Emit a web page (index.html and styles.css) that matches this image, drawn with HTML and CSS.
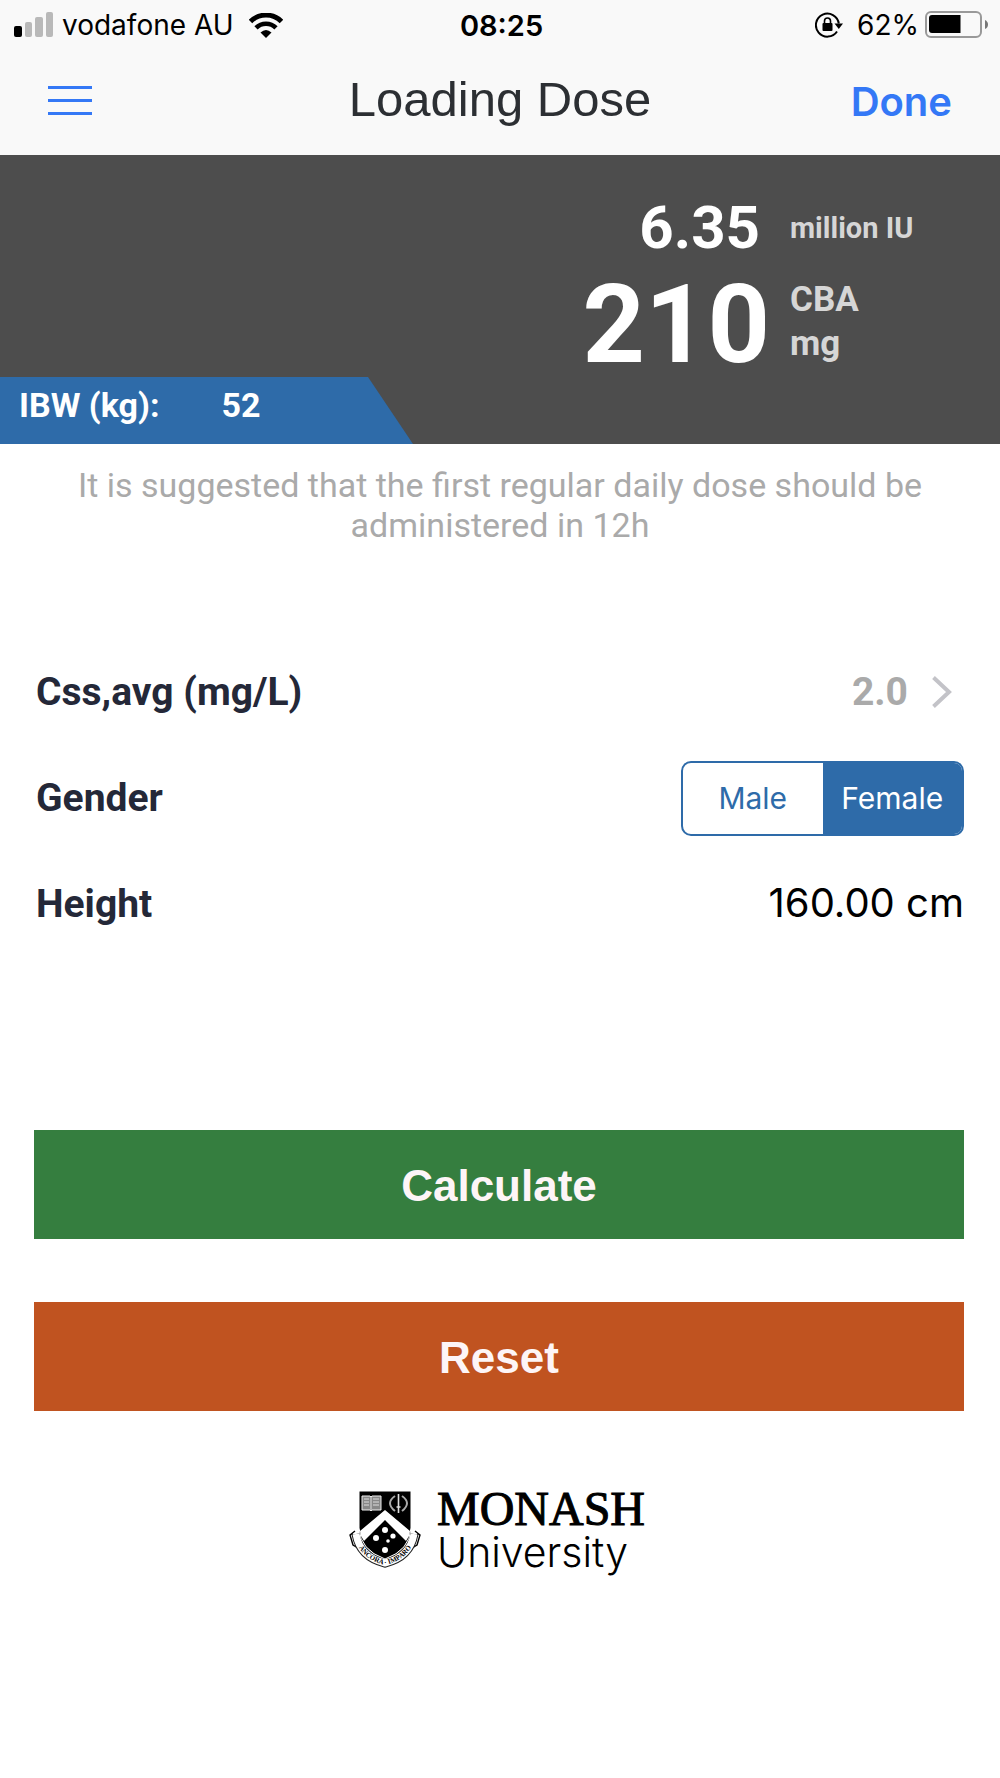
FILE: index.html
```html
<!DOCTYPE html>
<html lang="en">
<head>
    <meta charset="UTF-8">
    <meta name="viewport" content="width=device-width, initial-scale=1.0">
    <title>Loading Dose</title>
    <link rel="stylesheet" href="styles.css">
</head>
<body>

<header class="top">
    <div class="status-bar">
        <div class="status-left">
            <svg viewBox="0 0 40 26" width="40" height="26" aria-hidden="true">
                <rect x="0" y="14" width="8" height="11" rx="2" fill="#000"/>
                <rect x="11" y="10" width="7" height="15" rx="2" fill="#b9b9b9"/>
                <rect x="21" y="5" width="8" height="20" rx="2" fill="#b9b9b9"/>
                <rect x="32" y="0" width="7" height="25" rx="2" fill="#b9b9b9"/>
            </svg>
            <span class="carrier">vodafone AU</span>
            <svg viewBox="0 0 34 25" width="34" height="25" aria-hidden="true">
                <path d="M1.5 8.5A22 22 0 0 1 32.5 8.5" fill="none" stroke="#000" stroke-width="5"/>
                <path d="M7 14.8A14.2 14.2 0 0 1 27 14.8" fill="none" stroke="#000" stroke-width="4.6"/>
                <path d="M11.5 19.5Q17 14.5 22.5 19.5L17 25Z" fill="#000"/>
            </svg>
        </div>
        <span class="clock">08:25</span>
        <div class="status-right">
            <svg viewBox="0 0 28 26" width="28" height="26" aria-hidden="true">
                <path d="M22 19.5A11.5 11.5 0 1 1 23.8 11.5" fill="none" stroke="#000" stroke-width="2"/>
                <path d="M19.5 11.5H28L23.8 17Z" fill="#000"/>
                <rect x="7.5" y="11" width="10" height="8" rx="1" fill="#000"/>
                <path d="M9.5 11.5V9a3 3 0 0 1 6 0V11.5" fill="none" stroke="#000" stroke-width="1.6"/>
            </svg>
            <span class="percent">62%</span>
            <svg viewBox="0 0 64 28" width="64" height="28" aria-hidden="true">
                <rect x="1" y="1" width="55" height="25" rx="5" fill="none" stroke="#999" stroke-width="2"/>
                <path d="M7 4H35.5V22H7a3 3 0 0 1-3-3V7a3 3 0 0 1 3-3Z" fill="#000"/>
                <path d="M60 9q3 1.5 3 4.5t-3 4.5Z" fill="#777"/>
            </svg>
        </div>
    </div>
    <nav class="nav-bar">
        <button type="button" class="menu" aria-label="Menu">
            <span></span>
            <span></span>
            <span></span>
        </button>
        <h1>Loading Dose</h1>
        <button type="button" class="done">Done</button>
    </nav>
</header>

<section class="result">
    <div class="dose">
        <span class="dose-iu">6.35</span>
        <span class="unit-iu">million IU</span>
        <span class="dose-mg">210</span>
        <span class="unit-mg">CBA<br>mg</span>
    </div>
    <div class="ibw">
        <span>IBW (kg):</span>
        <span>52</span>
    </div>
</section>

<p class="note">It is suggested that the first regular daily dose should be administered in 12h</p>

<form class="dose-form">
    <div class="row">
        <label for="css">Css,avg (mg/L)</label>
        <button type="button" class="picker" id="css">
            2.0
            <svg viewBox="0 0 20 32" width="20" height="32" aria-hidden="true">
                <path d="M1.5 1.5L17 16L1.5 30.5" fill="none" stroke="#c3c3c8" stroke-width="4"/>
            </svg>
        </button>
    </div>
    <div class="row" role="radiogroup" aria-labelledby="gender">
        <span id="gender">Gender</span>
        <div class="segmented">
            <input type="radio" name="gender" id="male">
            <label for="male">Male</label>
            <input type="radio" name="gender" id="female" checked>
            <label for="female">Female</label>
        </div>
    </div>
    <div class="row">
        <label for="height">Height</label>
        <input type="text" class="height" id="height" value="160.00 cm">
    </div>

    <div class="actions">
        <button type="button" class="btn btn-calculate">Calculate</button>
        <button type="reset" class="btn btn-reset">Reset</button>
    </div>
</form>

<footer class="logo">
    <svg viewBox="0 0 72 80" width="72" height="80" role="img" aria-label="Crest">
        <!-- ribbon -->
        <path d="M6 41L1 45L4 55L9 58M66 41L71 45L68 55L63 58M3 44L8 54M69 44L64 54" fill="none" stroke="#000" stroke-width="1.4"/>
        <path d="M7 44Q11 67 36 73Q61 67 65 44" fill="none" stroke="#222" stroke-width="9"/>
        <path d="M7 44Q11 67 36 73Q61 67 65 44" fill="none" stroke="#fff" stroke-width="7"/>
        <path id="motto" d="M5 46Q11 69 36 75Q61 69 67 46" fill="none"/>
        <text class="motto"><textPath href="#motto" startOffset="50%" text-anchor="middle">ANCORA · IMPARO</textPath></text>
        <!-- shield -->
        <path d="M10 1H62V38Q61 60 36 69Q11 60 10 38Z" fill="#000" stroke="#fff" stroke-width="1"/>
        <path d="M36 20L61 41L60 46L57 51L36 30L15 51L12 46L11 41Z" fill="#fff"/>
        <g fill="#fff">
            <circle cx="36" cy="40" r="3"/>
            <circle cx="27" cy="48" r="3"/>
            <circle cx="44" cy="46" r="2.6"/>
            <circle cx="39" cy="51" r="1.8"/>
            <circle cx="36" cy="60" r="3"/>
        </g>
        <!-- book and wreath -->
        <path d="M13 6H21L22 7L23 6H32V20H23L22 21L21 20H13Z" fill="#888" stroke="#eee" stroke-width="1"/>
        <path d="M22 7V20M15 9H20M15 12H20M15 15H20M24 9H30M24 12H30M24 15H30" fill="none" stroke="#ddd" stroke-width="1"/>
        <path d="M46 6Q36 13 46 21M53 6Q63 13 53 21" fill="none" stroke="#aaa" stroke-width="2"/>
        <path d="M49.5 4V23M47.5 17H51.5" fill="none" stroke="#ddd" stroke-width="1.6"/>
    </svg>
    <div class="logo-text">
        <span class="logo-name">MONASH</span>
        <span class="logo-sub">University</span>
    </div>
</footer>

</body>
</html>
```
FILE: styles.css
```css
/* Global Styles */
* {
    box-sizing: border-box;
}

body {
    margin: 0;
    background: white;
    font-family: Roboto, sans-serif;
}

button, input {
    font: inherit;
    border: none;
    background: none;
    padding: 0;
}

button {
    cursor: pointer;
}

/* Header */
.top {
    background: #f9f9f9;
    font-family: Inter, sans-serif;
}

.status-bar {
    display: grid;
    grid-template-columns: 1fr auto 1fr;
    align-items: center;
    height: 50px;
    padding: 0 11px 0 14px;
    font-size: 28px;
}

.status-left, .status-right {
    display: flex;
    align-items: center;
}

.carrier {
    margin: 0 15px 0 8px;
}

.clock {
    font-size: 29px;
    font-weight: 600;
}

.status-right {
    justify-content: flex-end;
}

.percent {
    margin: 0 6px 0 14px;
}

.nav-bar {
    display: grid;
    grid-template-columns: 1fr auto 1fr;
    align-items: baseline;
    height: 105px;
    padding: 21px 48px 0;
}

.menu {
    display: flex;
    flex-direction: column;
    align-self: start;
    justify-self: start;
    gap: 10px;
    padding: 15px 0;
}

.menu span {
    width: 44px;
    height: 3px;
    background: #3478f6;
}

h1 {
    margin: 0;
    font-family: "Liberation Sans", sans-serif;
    font-size: 49px;
    font-weight: normal;
    line-height: 56px;
    color: #2c2f33;
}

.done {
    justify-self: end;
    font-size: 40px;
    font-weight: 600;
    color: #3478f6;
}

/* Result Panel */
.result {
    background: #4d4d4d;
    padding-top: 37px;
    font-weight: bold;
}

.dose {
    display: grid;
    grid-template-columns: 77% 1fr;
    column-gap: 20px;
    align-items: center;
    color: #d6d6d6;
}

.dose-iu, .dose-mg {
    text-align: right;
    color: white;
}

.dose-iu {
    padding-right: 10px;
    font-size: 60px;
    line-height: 72px;
}

.dose-mg {
    padding-top: 9px;
    font-size: 109px;
    line-height: 104px;
}

.unit-iu {
    font-size: 29px;
}

.unit-mg {
    padding-top: 3px;
    font-size: 35px;
    line-height: 44px;
}

.ibw {
    display: flex;
    gap: 62px;
    width: 413px;
    height: 67px;
    padding: 8px 19px;
    background: #2e6ba9;
    clip-path: polygon(0 0, 368px 0, 100% 100%, 0 100%);
    color: white;
    font-size: 34px;
    line-height: 40px;
}

.note {
    margin: 0;
    padding: 21px 60px;
    color: #aaa;
    font-size: 34px;
    line-height: 40px;
    text-align: center;
}

/* Form Styling */
.dose-form {
    padding: 73px 36px 0 34px;
}

.row {
    display: flex;
    justify-content: space-between;
    align-items: center;
    height: 106px;
    padding-left: 2px;
    color: #242838;
    font-size: 39px;
    font-weight: bold;
}

.picker {
    display: flex;
    align-items: center;
    gap: 24px;
    padding-right: 12px;
    color: #aaa;
}

.segmented {
    display: flex;
    width: 283px;
    height: 75px;
    border: 2px solid #2e6ba9;
    border-radius: 10px;
    overflow: hidden;
    font-family: Inter, sans-serif;
    font-size: 30px;
    font-weight: normal;
}

.segmented input {
    position: absolute;
    opacity: 0;
}

.segmented label {
    flex: 1;
    display: flex;
    justify-content: center;
    align-items: center;
    color: #2e6ba9;
}

.segmented input:checked + label {
    background: #2e6ba9;
    color: white;
}

.height {
    width: 300px;
    padding-bottom: 4px;
    font-family: Inter, sans-serif;
    font-size: 40px;
    font-weight: normal;
    text-align: right;
}

/* Buttons */
.actions {
    display: flex;
    flex-direction: column;
    gap: 63px;
    padding-top: 173px;
}

.btn {
    height: 109px;
    padding-top: 3px;
    color: #fdf5f7;
    font-family: "Liberation Sans", sans-serif;
    font-size: 44px;
    font-weight: bold;
}

.btn-calculate {
    background: #357e3f;
}

.btn-reset {
    background: #c05320;
}

/* Logo */
.logo {
    display: flex;
    justify-content: center;
    gap: 16px;
    padding: 79px 6px 0 0;
}

.logo-text {
    display: flex;
    flex-direction: column;
}

.logo-name {
    font-family: "Liberation Serif", serif;
    font-size: 48px;
    line-height: 38px;
    -webkit-text-stroke: 1px black;
}

.logo-sub {
    font-family: Inter, sans-serif;
    font-size: 41px;
    font-weight: 300;
    line-height: 48px;
}

.motto {
    font-family: "Liberation Serif", serif;
    font-size: 7px;
    font-weight: bold;
}
```
